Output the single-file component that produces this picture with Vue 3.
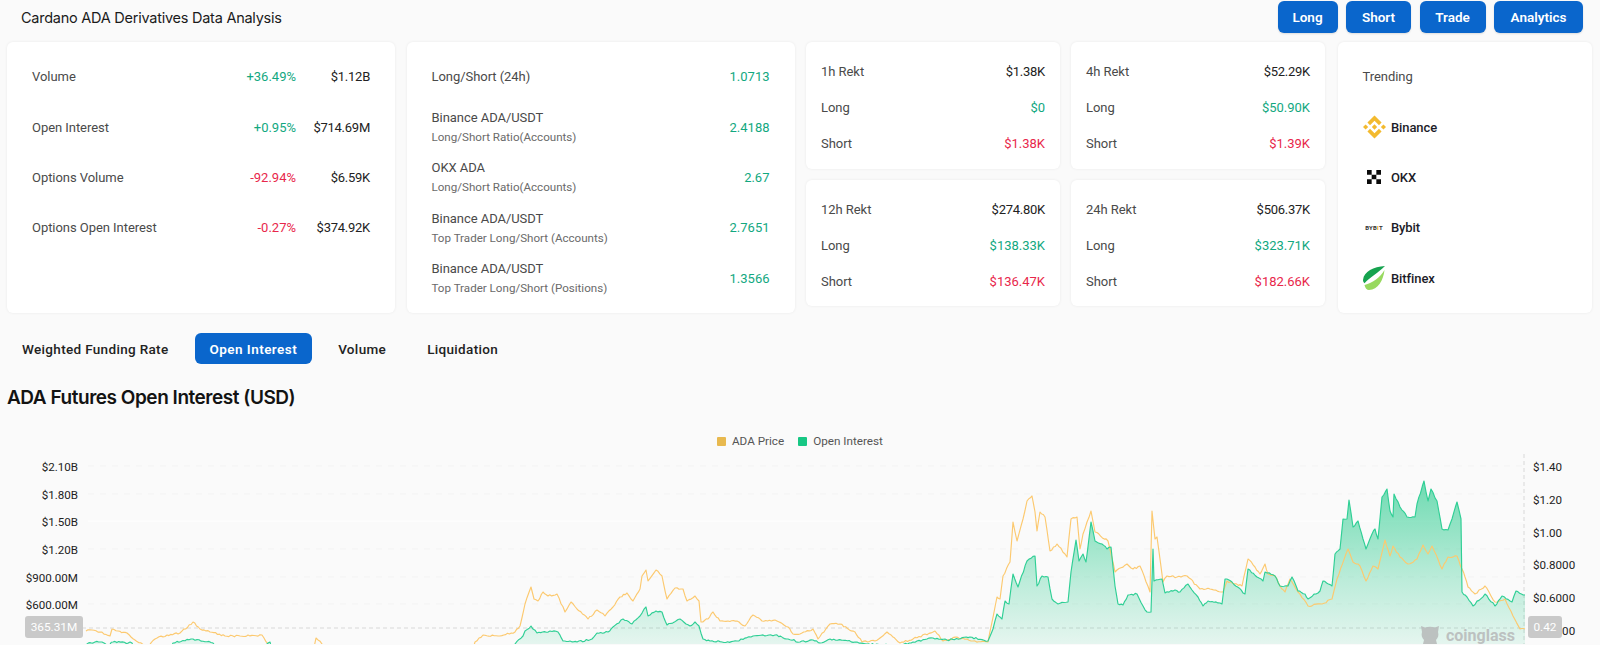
<script setup>
const volumeRows = [
  { label: 'Volume', pct: '+36.49%', up: true, value: '$1.12B' },
  { label: 'Open Interest', pct: '+0.95%', up: true, value: '$714.69M' },
  { label: 'Options Volume', pct: '-92.94%', up: false, value: '$6.59K' },
  { label: 'Options Open Interest', pct: '-0.27%', up: false, value: '$374.92K' },
]
const ratioRows = [
  { name: 'Long/Short (24h)', sub: '', value: '1.0713' },
  { name: 'Binance ADA/USDT', sub: 'Long/Short Ratio(Accounts)', value: '2.4188' },
  { name: 'OKX ADA', sub: 'Long/Short Ratio(Accounts)', value: '2.67' },
  { name: 'Binance ADA/USDT', sub: 'Top Trader Long/Short (Accounts)', value: '2.7651' },
  { name: 'Binance ADA/USDT', sub: 'Top Trader Long/Short (Positions)', value: '1.3566' },
]
const rekt = [
  { title: '1h Rekt', total: '$1.38K', long: '$0', short: '$1.38K' },
  { title: '4h Rekt', total: '$52.29K', long: '$50.90K', short: '$1.39K' },
  { title: '12h Rekt', total: '$274.80K', long: '$138.33K', short: '$136.47K' },
  { title: '24h Rekt', total: '$506.37K', long: '$323.71K', short: '$182.66K' },
]
const tabs = ['Weighted Funding Rate', 'Open Interest', 'Volume', 'Liquidation']
const leftAxis = [['$2.10B', 467], ['$1.80B', 494.5], ['$1.50B', 522], ['$1.20B', 550], ['$900.00M', 578], ['$600.00M', 605]]
const rightAxis = [['$1.40', 467], ['$1.20', 500], ['$1.00', 533], ['$0.8000', 565], ['$0.6000', 598], ['$0.4000', 631]]
const grid = [467, 495, 550, 578, 605]

const priceA = [[86,632],[92,631],[100,633],[110,637],[112,630],[118,632],[127,634],[135,641],[147,648],[155,640],[167,636],[180,634],[193,623],[200,630],[210,633],[225,637],[240,637],[262,636],[268,645],[272,660]]
const priceB = [[312,660],[316,639],[322,645],[330,660]]
const priceC = [[470,660],[475,643],[483,636],[500,637],[515,633],[520,627],[525,605],[531,588],[534,600],[538,602],[543,593],[548,597],[557,595],[565,613],[571,603],[577,610],[588,620],[597,611],[605,617],[613,608],[620,598],[627,594],[633,602],[640,590],[642,577],[646,571],[648,582],[656,571],[662,577],[667,600],[675,589],[683,590],[687,602],[695,597],[699,602],[701,623],[708,620],[713,613],[720,622],[728,622],[737,622],[745,627],[753,616],[762,622],[775,621],[788,628],[793,635],[800,635],[813,630],[818,640],[830,625],[840,625],[855,633],[862,643],[875,642],[887,633],[900,644],[913,640],[935,632],[943,642],[957,638],[973,642],[988,643],[997,598],[1000,600],[1003,577],[1010,563],[1013,523],[1017,542],[1023,520],[1027,502],[1032,497],[1035,513],[1037,532],[1040,513],[1045,518],[1050,552],[1057,545],[1067,558],[1071,520],[1077,518],[1080,550],[1083,535],[1087,523],[1091,512],[1095,533],[1108,542],[1115,573],[1127,565],[1133,570],[1140,567],[1150,593],[1152,512],[1155,540],[1157,538],[1163,583],[1167,577],[1177,578],[1187,577],[1200,590],[1210,590],[1223,593],[1227,582],[1242,587],[1248,560],[1255,568],[1260,575],[1265,565],[1268,575],[1275,577],[1280,587],[1285,593],[1290,580],[1298,593],[1308,607],[1322,605],[1332,600],[1337,580],[1348,550],[1353,563],[1360,567],[1366,582],[1373,567],[1378,570],[1385,541],[1390,557],[1393,547],[1400,558],[1408,565],[1417,560],[1423,546],[1428,555],[1432,547],[1442,570],[1448,558],[1457,557],[1462,570],[1465,578],[1468,588],[1475,595],[1485,587],[1495,603],[1505,600],[1513,617],[1520,630],[1525,630]]
const oiA = [[85,660],[87,645],[95,643],[102,643],[108,646],[113,643],[132,644],[140,660]]
const oiB = [[165,660],[173,644],[193,640],[213,644],[222,660]]
const oiC = [[262,660],[267,645],[270,643],[274,660]]
const oiD = [[505,660],[515,645],[523,637],[525,632],[531,627],[537,634],[550,632],[558,633],[563,642],[570,642],[577,643],[592,640],[597,634],[608,633],[613,628],[623,620],[632,625],[640,617],[646,608],[648,617],[656,612],[662,613],[667,626],[680,620],[690,627],[695,623],[699,627],[703,640],[710,642],[722,643],[737,642],[753,637],[775,636],[788,640],[800,643],[813,641],[820,644],[830,640],[855,643],[867,645],[880,646],[900,646],[913,643],[933,639],[947,641],[970,638],[988,642],[993,630],[997,615],[1002,620],[1005,602],[1009,605],[1013,575],[1018,588],[1027,562],[1035,557],[1037,587],[1042,577],[1048,578],[1052,600],[1058,605],[1068,603],[1071,573],[1076,541],[1079,562],[1083,555],[1086,563],[1091,523],[1095,542],[1102,545],[1107,550],[1111,548],[1115,587],[1118,605],[1123,606],[1128,596],[1137,595],[1143,607],[1147,613],[1151,613],[1153,550],[1154,582],[1162,580],[1165,594],[1175,591],[1180,593],[1188,585],[1198,598],[1203,607],[1208,602],[1222,605],[1225,580],[1232,583],[1245,595],[1248,570],[1257,578],[1263,582],[1265,573],[1275,577],[1280,587],[1288,587],[1292,578],[1298,592],[1305,595],[1308,600],[1320,592],[1323,582],[1332,587],[1335,555],[1340,550],[1343,520],[1347,520],[1349,501],[1353,528],[1358,522],[1363,540],[1366,550],[1372,535],[1375,530],[1378,540],[1382,498],[1387,490],[1390,512],[1393,518],[1394,495],[1400,508],[1407,518],[1415,518],[1417,505],[1424,482],[1428,502],[1431,490],[1437,502],[1442,530],[1448,531],[1452,520],[1457,503],[1461,520],[1462,593],[1467,598],[1473,607],[1485,595],[1495,607],[1502,597],[1512,603],[1516,592],[1525,596]]

// Break long segments into short jagged steps so the series read like real market data.
function jag(pts, seed) {
  let s = seed
  const rnd = () => {
    s = (s * 16807) % 2147483647
    return s / 2147483647 - 0.5
  }
  const out = []
  for (let i = 0; i < pts.length - 1; i++) {
    const [x0, y0] = pts[i]
    const [x1, y1] = pts[i + 1]
    const steps = Math.max(1, Math.round((x1 - x0) / 2))
    for (let k = 0; k < steps; k++) {
      const t = k / steps
      const n = k === 0 ? 0 : rnd() * 1.8
      out.push([+(x0 + (x1 - x0) * t).toFixed(1), +(y0 + (y1 - y0) * t + n).toFixed(1)])
    }
  }
  out.push(pts[pts.length - 1])
  return out
}
const line = (pts) => pts.map((p) => p.join(',')).join(' ')
const priceLines = [priceA, priceB, priceC].map((p, i) => line(jag(p, 101 + i)))
const oiSeries = [oiA, oiB, oiC, oiD].map((p, i) => jag(p, 733 + i))
const oiLines = oiSeries.map(line)
const oiAreas = oiSeries.map((pts) => `${line(pts)} ${pts[pts.length - 1][0]},660 ${pts[0][0]},660`)
</script>

<template>
  <div class="page">
    <header class="top">
      <h1 class="title">Cardano ADA Derivatives Data Analysis</h1>
      <nav class="actions">
        <button class="btn btn-long">Long</button>
        <button class="btn btn-short">Short</button>
        <button class="btn btn-trade">Trade</button>
        <button class="btn btn-analytics">Analytics</button>
      </nav>
    </header>

    <section class="stats">
      <div class="card list">
        <div v-for="r in volumeRows" :key="r.label" class="row">
          <span class="label grow">{{ r.label }}</span>
          <span :class="['pct', r.up ? 'up' : 'down']">{{ r.pct }}</span>
          <span class="val val-w">{{ r.value }}</span>
        </div>
      </div>

      <div class="card list">
        <div v-for="(r, i) in ratioRows" :key="i" class="row">
          <div class="grow names">
            <span class="label">{{ r.name }}</span>
            <span v-if="r.sub" class="sub">{{ r.sub }}</span>
          </div>
          <span class="up">{{ r.value }}</span>
        </div>
      </div>

      <div class="rekt-grid">
        <div v-for="(r, i) in rekt" :key="r.title" :class="['card', 'rekt', i > 1 ? 'rekt-low' : '']">
          <div class="rekt-row"><span class="label">{{ r.title }}</span><span class="val">{{ r.total }}</span></div>
          <div class="rekt-row"><span class="label">Long</span><span class="up">{{ r.long }}</span></div>
          <div class="rekt-row"><span class="label">Short</span><span class="down">{{ r.short }}</span></div>
        </div>
      </div>

      <div class="card list trending">
        <div class="row"><span class="label">Trending</span></div>
        <div class="row brand">
          <span class="logo">
            <svg width="24" height="24" viewBox="0 0 126.61 126.61"><path fill="#f3ba2f" d="M38.73 53.2l24.59-24.58 24.6 24.6 14.3-14.31L63.32 0 24.43 38.9zM0 63.31l14.3-14.31 14.31 14.31-14.31 14.3zM38.73 73.41l24.59 24.59 24.6-24.6 14.31 14.29-38.91 38.92-38.89-38.87zM98.28 63.31l14.3-14.31 14.31 14.3-14.31 14.32zM77.83 63.3L63.32 48.78 52.59 59.51l-1.24 1.23-2.54 2.54 14.51 14.52 14.51-14.5z"/></svg>
          </span>
          <span>Binance</span>
        </div>
        <div class="row brand">
          <span class="logo">
            <svg width="14" height="14" viewBox="0 0 15 15"><path fill="#0b0b0b" d="M0 0h5v5H0zM10 0h5v5h-5zM5 5h5v5H5zM0 10h5v5H0zM10 10h5v5h-5z"/></svg>
          </span>
          <span>OKX</span>
        </div>
        <div class="row brand">
          <span class="logo bybit">BYB<i>I</i>T</span>
          <span>Bybit</span>
        </div>
        <div class="row brand">
          <span class="logo">
            <svg width="23" height="24" viewBox="0 0 23 24">
              <path fill="#16a34f" d="M22 0C10.5 1 1 5 0 14c0 1.200.5 2.500 1.500 3.200C7 11 15 7 22 0z"/>
              <path fill="#98d95f" d="M1.500 19C10 16.500 17 12 21.500 4 20.500 14 15 24 6 24c-2 0-4-2-4.500-5z"/>
            </svg>
          </span>
          <span>Bitfinex</span>
        </div>
      </div>
    </section>

    <nav class="tabs">
      <button v-for="t in tabs" :key="t" :class="['tab', t === 'Open Interest' ? 'active' : '']">{{ t }}</button>
    </nav>

    <h2 class="heading">ADA Futures Open Interest (USD)</h2>

    <div class="legend">
      <span class="swatch price"></span><span>ADA Price</span>
      <span class="swatch oi"></span><span>Open Interest</span>
    </div>

    <svg class="chart" width="1600" height="190" viewBox="0 455 1600 190">
      <defs>
        <linearGradient id="oiFill" gradientUnits="userSpaceOnUse" x1="0" y1="480" x2="0" y2="660">
          <stop offset="0" stop-color="#17c784" stop-opacity=".62"/>
          <stop offset="0.55" stop-color="#17c784" stop-opacity=".28"/>
          <stop offset="1" stop-color="#17c784" stop-opacity=".05"/>
        </linearGradient>
      </defs>

      <line v-for="y in grid" :key="y" x1="88" x2="1524" :y1="y" :y2="y" class="gridline"/>
      <line x1="88" x2="1524" y1="522" y2="522" class="gridline-solid"/>
      <line x1="1524" x2="1524" y1="455" y2="645" class="cross"/>
      <line x1="82" x2="1524" y1="629" y2="629" class="cross"/>

      <polygon v-for="(a, i) in oiAreas" :key="'a' + i" :points="a" fill="url(#oiFill)"/>
      <polyline v-for="(l, i) in priceLines" :key="'p' + i" :points="l" class="price-line"/>
      <polyline v-for="(l, i) in oiLines" :key="'o' + i" :points="l" class="oi-line"/>

      <text v-for="a in leftAxis" :key="a[0]" x="78" :y="a[1]" class="axis end">{{ a[0] }}</text>
      <text v-for="a in rightAxis" :key="a[0]" x="1533" :y="a[1]" class="axis">{{ a[0] }}</text>

      <rect x="25" y="617" width="58" height="22" rx="3" class="tag"/>
      <text x="54" y="628" class="tag-text">365.31M</text>
      <rect x="1528" y="617" width="34" height="22" rx="3" class="tag"/>
      <text x="1545" y="628" class="tag-text">0.42</text>

      <g class="mark">
        <path d="M1421 627l4 1.500c3-1 7-1 10 0l4-1.500-1 6c1 3 0 6-2 8l1 4h-14l1-4c-2-2-3-5-2-8z"/>
        <text x="1446" y="642" class="mark-text">coinglass</text>
      </g>
    </svg>
  </div>
</template>

<style scoped>
.page {
  width: 1600px;
  height: 645px;
  overflow: hidden;
  background: #fafafa;
  font-family: Roboto, "Liberation Sans", sans-serif;
  font-size: 13px;
  color: #222;
}
.top {
  height: 33px;
  margin-bottom: 9px;
  padding: 1px 17px 0 21px;
  box-sizing: border-box;
  display: flex;
  align-items: center;
  justify-content: space-between;
}
.title {
  margin: 0;
  font-family: Inter, Roboto, sans-serif;
  font-size: 14.5px;
  font-weight: 400;
  letter-spacing: -0.25px;
  color: #1b1b1b;
}
.actions { display: flex; gap: 8.5px; }
.btn {
  height: 32px;
  padding: 0;
  border: 0;
  border-radius: 6px;
  background: #0a66cc;
  color: #fff;
  font: 600 13.5px Roboto, sans-serif;
  box-shadow: 0 1px 2px rgba(0, 0, 0, .12);
}
.btn-long { width: 60px; }
.btn-short { width: 65px; }
.btn-trade { width: 66px; }
.btn-analytics { width: 89px; }

.stats {
  display: grid;
  grid-template-columns: 388px 388px 520px 254px;
  column-gap: 11.5px;
  padding-left: 7px;
  height: 271px;
}
.card {
  background: #fff;
  border-radius: 6px;
  box-shadow: 0 0 3px rgba(0, 0, 0, .07);
}
.list {
  padding: 9.5px 25px;
  display: flex;
  flex-direction: column;
  box-sizing: border-box;
}
.row {
  height: 50.4px;
  display: flex;
  align-items: center;
  flex: none;
}
.grow { flex: 1; }
.names { display: flex; flex-direction: column; gap: 5px; }
.label { color: #4a4a4a; letter-spacing: -0.05px; }
.sub { color: #6a6a6a; font-size: 11.6px; }
.val { color: #222; letter-spacing: -0.25px; }
.val-w { width: 74px; text-align: right; }
.up { color: #12a87f; }
.down { color: #e8274b; }

.rekt-grid {
  display: grid;
  grid-template-columns: 254px 254px;
  grid-template-rows: 127px 126px;
  gap: 11px 11px;
}
.rekt {
  padding: 11px 15px;
  box-sizing: border-box;
  display: flex;
  flex-direction: column;
}
.rekt-low { padding-top: 11.5px; }
.rekt-row {
  height: 36px;
  display: flex;
  align-items: center;
  justify-content: space-between;
  flex: none;
}
.brand { font-weight: 500; color: #1c1c28; gap: 5.5px; letter-spacing: -0.1px; }
.logo {
  width: 23px;
  display: flex;
  align-items: center;
  justify-content: center;
  flex: none;
}
.bybit { font-size: 6px; font-weight: 700; color: #333; letter-spacing: .2px; }
.bybit i { color: #f7a600; font-style: normal; }

.tabs {
  margin-top: 20px;
  padding-left: 7px;
  display: flex;
  gap: 11px;
}
.tab {
  height: 31px;
  padding: 0 15px;
  border: 0;
  border-radius: 6px;
  background: none;
  color: #222;
  font: 500 13.5px Roboto, sans-serif;
  letter-spacing: .33px;
}
.tab.active { background: #0a66cc; color: #fff; font-weight: 600; letter-spacing: .45px; }

.heading {
  margin: 20px 0 0 7px;
  height: 26px;
  line-height: 28px;
  font-family: Inter, Roboto, sans-serif;
  font-size: 19px;
  font-weight: 600;
  letter-spacing: -0.47px;
  color: #131313;
}
.legend {
  margin-top: 23px;
  height: 16px;
  padding-left: 717px;
  display: flex;
  align-items: center;
  font-size: 11.7px;
  color: #555;
}
.swatch { width: 9px; height: 9px; margin-right: 6px; border-radius: 1px; }
.swatch.price { background: #e8b94f; }
.swatch.oi { background: #17c784; margin-left: 14px; }

.chart { display: block; margin-top: 5px; }
.gridline { stroke: #f3f3f3; stroke-width: 1; stroke-dasharray: 6 6; }
.gridline-solid { stroke: #fff; stroke-width: 1; }
.cross { stroke: #d8d8d8; stroke-width: 1; stroke-dasharray: 4 3; }
.price-line { fill: none; stroke: #fcc96f; stroke-width: 1.15; stroke-linejoin: round; }
.oi-line { fill: none; stroke: #2fcf95; stroke-width: 1.15; stroke-linejoin: round; }
.axis { font-size: 11.6px; fill: #222; dominant-baseline: central; transform: translateY(1px); }
.axis.end { text-anchor: end; }
.tag { fill: #c9c9c9; }
.tag-text { font-size: 11.8px; fill: #fff; text-anchor: middle; dominant-baseline: central; }
.mark { fill: #b9bcbc; opacity: .9; }
.mark-text { font-size: 16px; font-weight: 700; }
</style>

<style>
html, body { margin: 0; overflow: hidden; background: #fafafa; }
</style>
